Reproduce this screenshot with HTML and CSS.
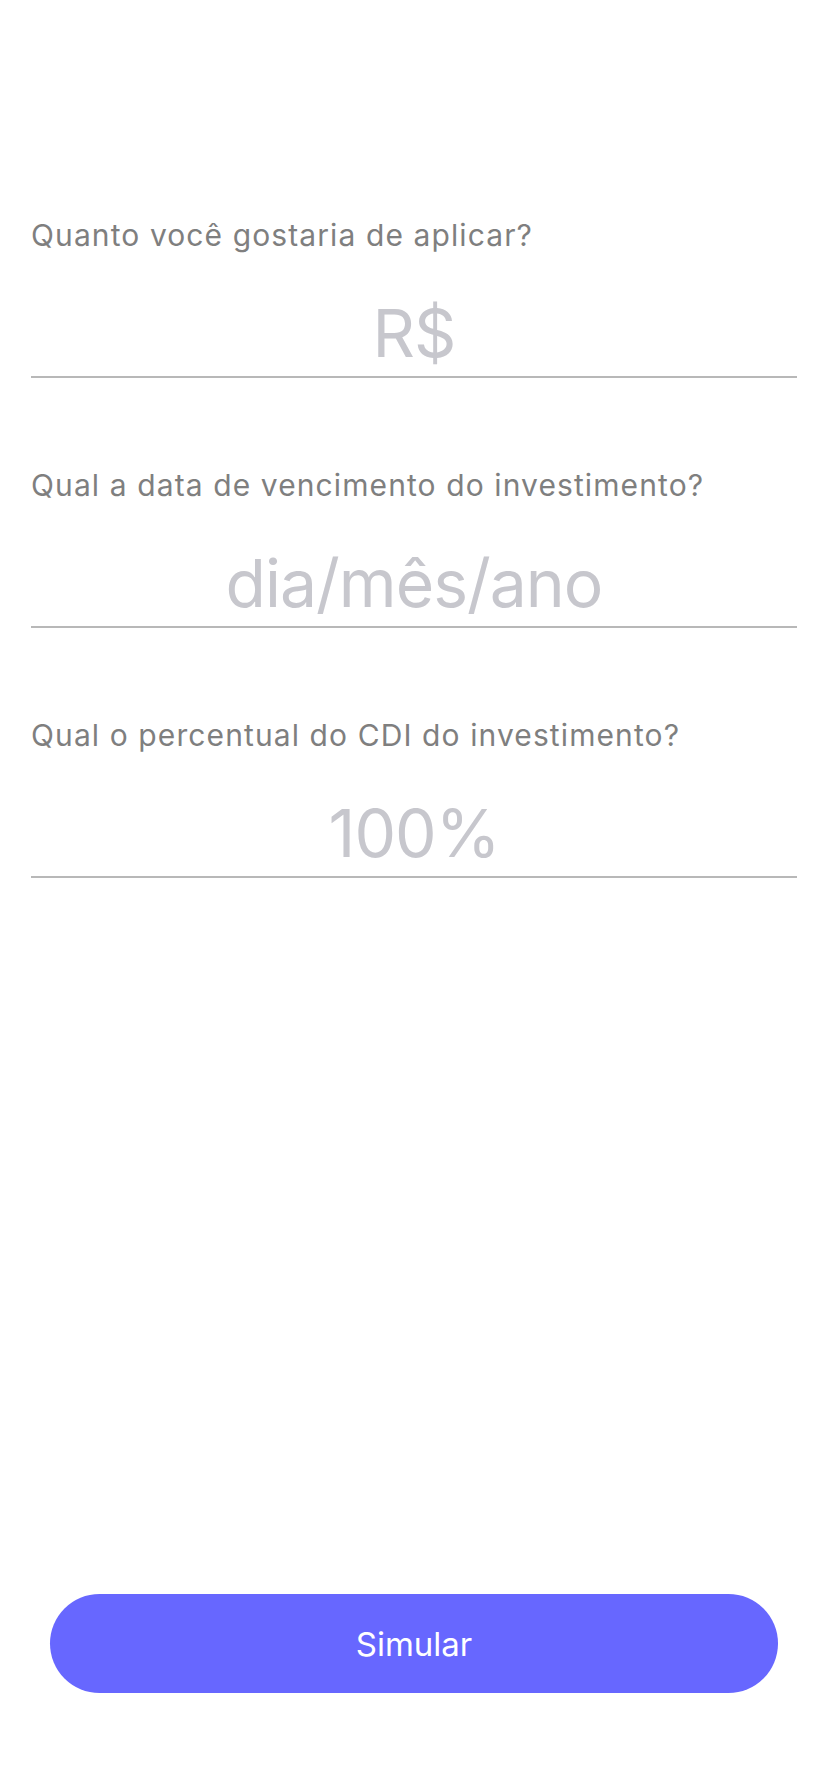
FILE: index.html
```html
<!DOCTYPE html>
<html lang="pt-BR">
<head>
<meta charset="utf-8">
<title>Simulador</title>
<link rel="stylesheet" href="styles.css">
</head>
<body>
<main class="screen">
  <form class="form">
    <div class="field">
      <label class="field-label">Quanto você gostaria de aplicar?</label>
      <div class="field-input">R$</div>
    </div>
    <div class="field">
      <label class="field-label">Qual a data de vencimento do investimento?</label>
      <div class="field-input">dia/mês/ano</div>
    </div>
    <div class="field">
      <label class="field-label">Qual o percentual do CDI do investimento?</label>
      <div class="field-input">100%</div>
    </div>
  </form>
  <button class="submit" type="button">Simular</button>
</main>
</body>
</html>
```

FILE: styles.css
```css
html, body {
  margin: 0;
  padding: 0;
  background: #ffffff;
}

.screen {
  min-height: 100vh;
  display: flex;
  flex-direction: column;
  font-family: Inter, "Noto Sans", sans-serif;
}

.form {
  display: flex;
  flex-direction: column;
  gap: 87px;
  padding: 215px 31px 0;
  margin: 0;
}

.field {
  display: flex;
  flex-direction: column;
  gap: 38px;
}

.field-label {
  font-size: 30px;
  line-height: 40px;
  letter-spacing: 1.1px;
  color: #7f7f7f;
}

.field-input {
  font-size: 66px;
  line-height: 80px;
  letter-spacing: -1px;
  padding-bottom: 3px;
  text-align: center;
  color: #c7c7cd;
  border-bottom: 2px solid #b8b8b8;
}

.submit {
  margin: auto 50px 99px;
  height: 99px;
  border: 0;
  border-radius: 50px;
  background: #6767ff;
  color: #ffffff;
  font-family: Inter, "Noto Sans", sans-serif;
  font-size: 33px;
  padding: 0;
}
```
